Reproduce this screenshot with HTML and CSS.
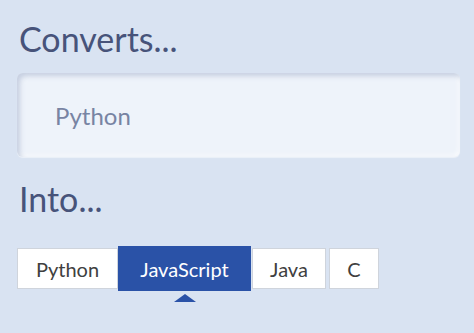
FILE: index.html
```html
<!DOCTYPE html>
<html>
<head>
<meta charset="utf-8">
<link rel="stylesheet" href="styles.css">
</head>
<body>
<div class="page">
  <h1 class="heading">Converts...</h1>
  <div class="input"><span class="placeholder">Python</span></div>
  <h2 class="heading into">Into...</h2>
  <div class="tabs">
    <div class="tab">Python</div>
    <div class="tab active">JavaScript</div>
    <div class="tab">Java</div>
    <div class="tab c">C</div>
  </div>
</div>
</body>
</html>
```
FILE: styles.css
```css
html, body {
  margin: 0;
  padding: 0;
  background: #d9e3f2;
  width: 474px;
  height: 333px;
  overflow: hidden;
}
.page {
  padding: 17px 14px 0 17px;
  font-family: Lato, "Noto Sans", sans-serif;
}
.heading {
  margin: 0;
  font-weight: 400;
  font-size: 34px;
  line-height: 44px;
  color: #47537a;
  padding-left: 2px;
}
.input {
  margin-top: 12px;
  height: 84px;
  border-radius: 6px;
  background: #eef3fa;
  box-shadow: inset 3px 3px 5px rgba(150, 165, 195, 0.45), inset -2px -2px 4px rgba(255,255,255,0.6), 0 1px 1px rgba(255,255,255,0.5);
  display: flex;
  align-items: center;
  padding-left: 38px;
}
.placeholder {
  font-size: 24px;
  color: #7884a3;
}
.into {
  margin-top: 20px;
}
.tabs {
  margin-top: 25px;
  display: flex;
  align-items: center;
}
.tab {
  height: 41px;
  box-sizing: border-box;
  background: #ffffff;
  border: 1px solid #cfd4dc;
  display: flex;
  align-items: center;
  justify-content: center;
  font-size: 20px;
  color: #404040;
  width: 101px;
}
.tab.active {
  position: relative;
  height: 45px;
  width: 133px;
  background: #2a52a7;
  border-color: #2a52a7;
  color: #ffffff;
}
.tab.active::after {
  content: "";
  position: absolute;
  left: 50%;
  bottom: -12px;
  transform: translateX(-50%);
  border-left: 11px solid transparent;
  border-right: 11px solid transparent;
  border-bottom: 8px solid #2a52a7;
}
.tab:nth-child(3) {
  width: 74px;
  margin-left: 1px;
}
.tab.c {
  width: 50px;
  margin-left: 3px;
}
```
